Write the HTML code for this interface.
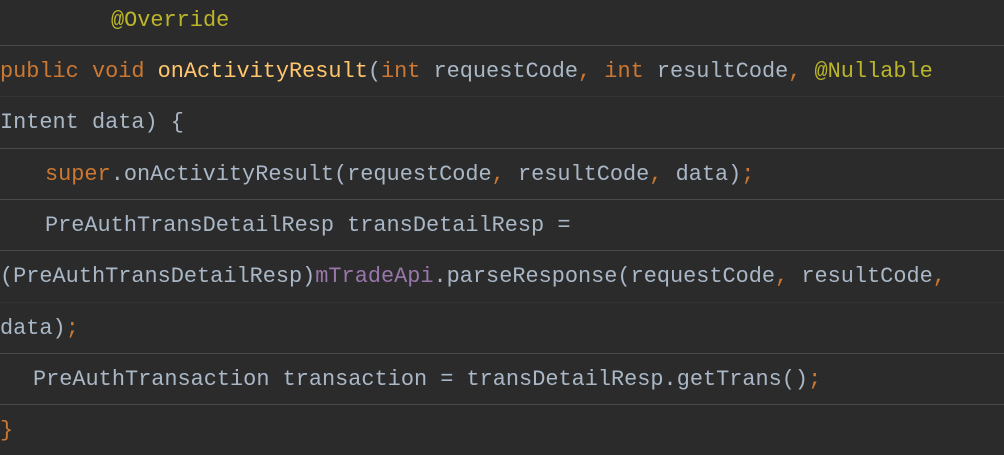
<!DOCTYPE html>
<html><head><meta charset="utf-8"><style>
html,body{margin:0;padding:0;background:#2b2b2b;width:1004px;height:449px;overflow:hidden}
.r{position:absolute;left:0;width:1004px;font-family:"Liberation Mono",monospace;font-size:21.9px;color:#a9b7c6;white-space:pre;display:flex;align-items:center}
.s{position:absolute;left:0;width:1004px;height:1px;background:#4a4a4a}
.f{background:#333}
.k{color:#cc7832}.m{color:#ffc66d}.a{color:#bbb529}.p{color:#9876aa}
</style></head><body>
<div class="r" style="top:0;height:41px"><span style="margin-left:111px" class="a">@Override</span></div>
<div class="s" style="top:45px"></div>
<div class="r" style="top:46px;height:50px"><span><span class="k">public void </span><span class="m">onActivityResult</span>(<span class="k">int </span>requestCode<span class="k">, int </span>resultCode<span class="k">, </span><span class="a">@Nullable</span></span></div>
<div class="s f" style="top:96px"></div>
<div class="r" style="top:97px;height:51px"><span>Intent data) {</span></div>
<div class="s" style="top:148px"></div>
<div class="r" style="top:149px;height:50px"><span style="margin-left:45px"><span class="k">super</span>.onActivityResult(requestCode<span class="k">, </span>resultCode<span class="k">, </span>data)<span class="k">;</span></span></div>
<div class="s" style="top:199px"></div>
<div class="r" style="top:200px;height:50px"><span style="margin-left:45px">PreAuthTransDetailResp transDetailResp =</span></div>
<div class="s" style="top:250px"></div>
<div class="r" style="top:251px;height:51px"><span>(PreAuthTransDetailResp)<span class="p">mTradeApi</span>.parseResponse(requestCode<span class="k">, </span>resultCode<span class="k">,</span></span></div>
<div class="s f" style="top:302px"></div>
<div class="r" style="top:303px;height:50px"><span>data)<span class="k">;</span></span></div>
<div class="s" style="top:353px"></div>
<div class="r" style="top:354px;height:50px"><span style="margin-left:33px">PreAuthTransaction transaction = transDetailResp.getTrans()<span class="k">;</span></span></div>
<div class="s" style="top:404px"></div>
<div class="r" style="top:405px;height:50px"><span class="k">}</span></div>
</body></html>
